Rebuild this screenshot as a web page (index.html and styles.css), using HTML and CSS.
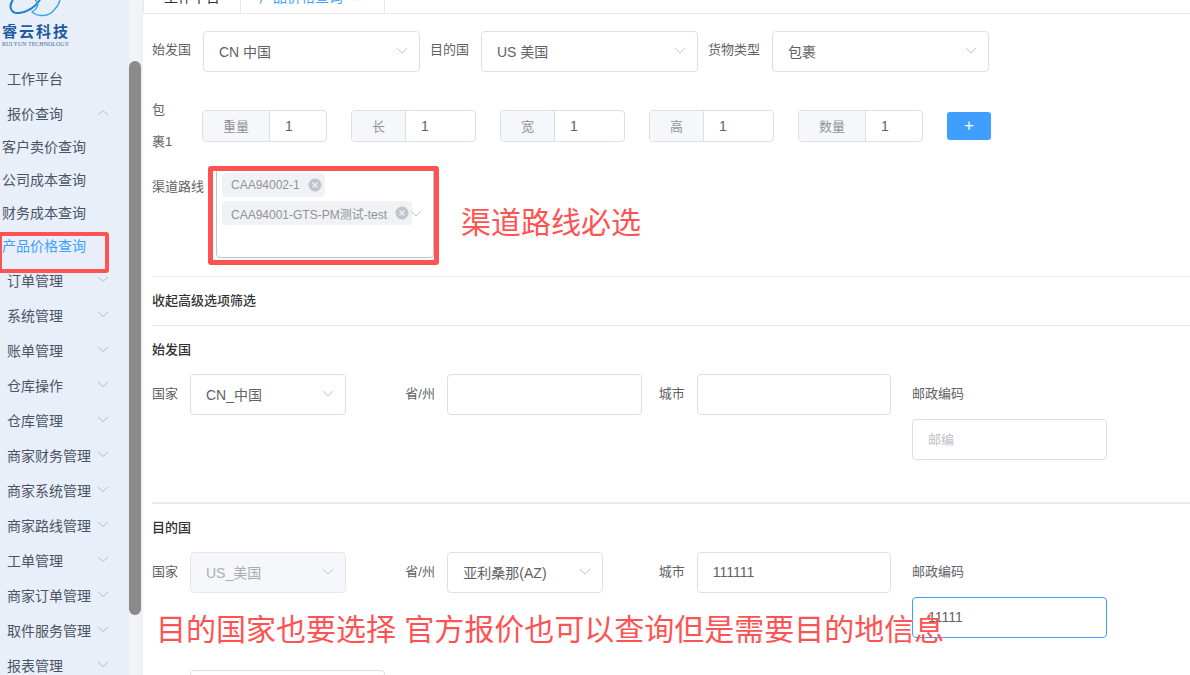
FILE: index.html
```html
<!DOCTYPE html>
<html lang="zh">
<head>
<meta charset="utf-8">
<title>产品价格查询</title>
<link rel="stylesheet" href="styles.css">
</head>
<body>
<div class="app">
  <aside class="sidebar">
    <div class="nav">
      <div class="logo">
        <svg class="logo-arcs" width="64" height="20" viewBox="0 0 64 20" fill="none">
          <path d="M11 0C6 6 9 14 17 13C26 12 33 7 38 0" stroke="#1f7fd0" stroke-width="2"/>
          <path d="M33 0C38 3 36 8 30 12C36 17 47 17 52 10C55 7 57 4 58 0" stroke="#3fa4e6" stroke-width="1.4"/>
        </svg>
        <div class="logo-name">睿云科技</div>
        <div class="logo-sub">RUI YUN TECHNOLOGY</div>
      </div>
      <div class="nav-item">工作平台</div>
      <div class="nav-item">报价查询<svg class="nav-chev" width="12" height="7" viewBox="0 0 12 7"><path d="M1 6L6 1.5L11 6"/></svg></div>
      <div class="nav-sub">客户卖价查询</div>
      <div class="nav-sub">公司成本查询</div>
      <div class="nav-sub">财务成本查询</div>
      <div class="nav-sub active">产品价格查询</div>
      <div class="nav-item">订单管理<svg class="nav-chev" width="12" height="7" viewBox="0 0 12 7"><path d="M1 1L6 5.5L11 1"/></svg></div>
      <div class="nav-item">系统管理<svg class="nav-chev" width="12" height="7" viewBox="0 0 12 7"><path d="M1 1L6 5.5L11 1"/></svg></div>
      <div class="nav-item">账单管理<svg class="nav-chev" width="12" height="7" viewBox="0 0 12 7"><path d="M1 1L6 5.5L11 1"/></svg></div>
      <div class="nav-item">仓库操作<svg class="nav-chev" width="12" height="7" viewBox="0 0 12 7"><path d="M1 1L6 5.5L11 1"/></svg></div>
      <div class="nav-item">仓库管理<svg class="nav-chev" width="12" height="7" viewBox="0 0 12 7"><path d="M1 1L6 5.5L11 1"/></svg></div>
      <div class="nav-item">商家财务管理<svg class="nav-chev" width="12" height="7" viewBox="0 0 12 7"><path d="M1 1L6 5.5L11 1"/></svg></div>
      <div class="nav-item">商家系统管理<svg class="nav-chev" width="12" height="7" viewBox="0 0 12 7"><path d="M1 1L6 5.5L11 1"/></svg></div>
      <div class="nav-item">商家路线管理<svg class="nav-chev" width="12" height="7" viewBox="0 0 12 7"><path d="M1 1L6 5.5L11 1"/></svg></div>
      <div class="nav-item">工单管理<svg class="nav-chev" width="12" height="7" viewBox="0 0 12 7"><path d="M1 1L6 5.5L11 1"/></svg></div>
      <div class="nav-item">商家订单管理<svg class="nav-chev" width="12" height="7" viewBox="0 0 12 7"><path d="M1 1L6 5.5L11 1"/></svg></div>
      <div class="nav-item">取件服务管理<svg class="nav-chev" width="12" height="7" viewBox="0 0 12 7"><path d="M1 1L6 5.5L11 1"/></svg></div>
      <div class="nav-item">报表管理<svg class="nav-chev" width="12" height="7" viewBox="0 0 12 7"><path d="M1 1L6 5.5L11 1"/></svg></div>
    </div>
    <div class="scrollbar"><div class="thumb"></div></div>
  </aside>

  <main class="main">
    <div class="tabs">
      <div class="tab tab-home">工作平台</div>
      <div class="tab tab-active">产品价格查询<span class="tab-x">×</span></div>
    </div>

    <div class="content">
      <div class="row-top">
        <span class="lbl lbl-a">始发国</span>
        <div class="select w217"><span>CN 中国</span><svg class="chev" width="12" height="7" viewBox="0 0 12 7"><path d="M1 1L6 6L11 1"/></svg></div>
        <span class="lbl lbl-b">目的国</span>
        <div class="select w217"><span>US 美国</span><svg class="chev" width="12" height="7" viewBox="0 0 12 7"><path d="M1 1L6 6L11 1"/></svg></div>
        <span class="lbl lbl-c">货物类型</span>
        <div class="select w217"><span>包裹</span><svg class="chev" width="12" height="7" viewBox="0 0 12 7"><path d="M1 1L6 6L11 1"/></svg></div>
      </div>

      <div class="row-parcel">
        <div class="parcel-label">包裹1</div>
        <div class="group g-wide"><span class="prepend">重量</span><span class="gval">1</span></div>
        <div class="group"><span class="prepend">长</span><span class="gval">1</span></div>
        <div class="group"><span class="prepend">宽</span><span class="gval">1</span></div>
        <div class="group"><span class="prepend">高</span><span class="gval">1</span></div>
        <div class="group g-wide"><span class="prepend">数量</span><span class="gval">1</span></div>
        <div class="add-btn">+</div>
      </div>

      <div class="row-route">
        <span class="route-label">渠道路线</span>
        <div class="multi">
          <div class="tag">CAA94002-1<svg class="tag-x" width="14" height="14" viewBox="0 0 14 14"><circle cx="7" cy="7" r="6.5"/><path d="M4.5 4.5L9.5 9.5M9.5 4.5L4.5 9.5"/></svg></div>
          <div class="tag">CAA94001-GTS-PM测试-test<svg class="tag-x" width="14" height="14" viewBox="0 0 14 14"><circle cx="7" cy="7" r="6.5"/><path d="M4.5 4.5L9.5 9.5M9.5 4.5L4.5 9.5"/></svg></div>
          <svg class="multi-chev" width="12" height="7" viewBox="0 0 12 7"><path d="M1 1L6 6L11 1"/></svg>
        </div>
      </div>

      <div class="hr"></div>
      <div class="sec-toggle">收起高级选项筛选</div>
      <div class="hr"></div>

      <div class="sec-title">始发国</div>
      <div class="addr">
        <div class="cell"><span class="cl cl-38">国家</span><div class="select w156"><span>CN_中国</span><svg class="chev" width="12" height="7" viewBox="0 0 12 7"><path d="M1 1L6 6L11 1"/></svg></div></div>
        <div class="cell"><span class="cl cl-42">省/州</span><div class="input w195"></div></div>
        <div class="cell"><span class="cl cl-38">城市</span><div class="input w194"></div></div>
        <div class="cell cell-col"><span class="cl">邮政编码</span><div class="input w195 ph">邮编</div></div>
      </div>

      <div class="hr hr-thick"></div>

      <div class="sec-title">目的国</div>
      <div class="addr">
        <div class="cell"><span class="cl cl-38">国家</span><div class="select w156 disabled"><span>US_美国</span><svg class="chev" width="12" height="7" viewBox="0 0 12 7"><path d="M1 1L6 6L11 1"/></svg></div></div>
        <div class="cell"><span class="cl cl-42">省/州</span><div class="select w156"><span>亚利桑那(AZ)</span><svg class="chev" width="12" height="7" viewBox="0 0 12 7"><path d="M1 1L6 6L11 1"/></svg></div></div>
        <div class="cell"><span class="cl cl-38">城市</span><div class="input w194">111111</div></div>
        <div class="cell cell-col"><span class="cl">邮政编码</span><div class="input w195 focus">11111</div></div>
      </div>
      <div class="last-row"><div class="input w195 last"></div></div>
    </div>
  </main>

  <div class="mark mark-nav"></div>
  <div class="mark mark-route"></div>
  <div class="note note-route">渠道路线必选</div>
  <div class="note note-dest">目的国家也要选择 官方报价也可以查询但是需要目的地信息</div>
</div>
</body>
</html>
```

FILE: styles.css
```css
* { box-sizing: border-box; }
html, body { margin: 0; height: 100%; }
body {
  overflow: hidden;
  background: #fff;
  font-family: "Liberation Sans", "Noto Sans CJK SC", sans-serif;
  font-size: 14px;
  color: #606266;
}
.app { position: relative; display: flex; width: 1190px; height: 675px; overflow: hidden; }

/* sidebar */
.sidebar { flex: 0 0 141px; display: flex; background: #e8eff9; height: 675px; }
.nav { width: 129px; flex: none; }
.logo { height: 61px; padding-left: 2px; }
.logo-arcs { display: block; }
.logo-name {
  margin-top: 4px;
  font-size: 15px;
  line-height: 16px;
  font-weight: 700;
  color: #1d5a9e;
  letter-spacing: 2px;
  white-space: nowrap;
}
.logo-sub {
  font-family: "Liberation Serif", serif;
  font-size: 6px;
  line-height: 8px;
  color: #3f6ea8;
  white-space: nowrap;
}
.nav-item {
  position: relative;
  height: 35px;
  line-height: 36px;
  padding-left: 7px;
  color: #4b5464;
  white-space: nowrap;
}
.nav-sub { height: 33px; line-height: 33px; padding-left: 2px; color: #4b5464; white-space: nowrap; }
.nav-sub.active { color: #409eff; }
.nav-chev { position: absolute; left: 97px; top: 13px; fill: none; stroke: #b4bcc8; stroke-width: 1; }
.scrollbar { width: 12px; background: #f1f3f7; }
.thumb { width: 12px; height: 554px; margin-top: 61px; background: #8b8b8b; border-radius: 6px; }

/* main */
.main { flex: 1; min-width: 0; border-left: 2px solid #eef1f6; }
.tabs { display: flex; height: 41px; margin-top: -27px; border-bottom: 1px solid #e6e8ee; }
.tab { height: 40px; line-height: 48px; color: #303133; white-space: nowrap; border-right: 1px solid #e6e8ee; text-align: center; }
.tab-home { width: 98px; border-left: 1px solid #e6e8ee; }
.tab-active { width: 144px; padding-right: 8px; color: #409eff; }
.tab-x { font-size: 12px; margin-left: 8px; }
.content { padding-left: 9px; }

.lbl { font-size: 13px; line-height: 38px; white-space: nowrap; align-self: flex-start; }
.select, .input {
  display: flex;
  align-items: center;
  height: 41px;
  border: 1px solid #dcdfe6;
  border-radius: 4px;
  padding-left: 15px;
  padding-bottom: 2px;
  background: #fff;
  color: #606266;
  flex: none;
}
.select { justify-content: space-between; padding-right: 11px; }
.chev { fill: none; stroke: #c0c4cc; stroke-width: 1; flex: none; }
.w217 { width: 217px; }
.w156 { width: 156px; }
.w195 { width: 195px; }
.w194 { width: 194px; }
.disabled { background: #f5f7fa; border-color: #e4e7ed; color: #a8adb6; }
.ph { color: #bcc0c8; font-size: 13px; }
.focus { border-color: #409eff; }

.row-top { display: flex; margin-top: 17px; height: 41px; }
.lbl-a { width: 51px; }
.lbl-b { width: 51px; margin-left: 10px; }
.lbl-c { width: 64px; margin-left: 10px; }

.row-parcel { display: flex; margin-top: 38px; height: 64px; }
.parcel-label { width: 24px; font-size: 13px; line-height: 32px; margin-top: -16px; margin-right: 26px; height: 64px; word-break: break-all; }
.group { display: flex; width: 125px; height: 32px; margin-right: 24px; border: 1px solid #dcdfe6; border-radius: 4px; overflow: hidden; flex: none; }
.prepend { width: 54px; flex: none; background: #f5f7fa; border-right: 1px solid #dcdfe6; color: #909399; font-size: 13px; line-height: 32px; text-align: center; }
.g-wide .prepend { width: 67px; }
.gval { padding-left: 15px; line-height: 30px; color: #606266; }
.add-btn { width: 44px; height: 28px; margin-top: 2px; background: #409eff; border-radius: 3px; color: #fff; font-size: 17px; line-height: 27px; text-align: center; }

.row-route { display: flex; height: 102px; }
.route-label { width: 64px; font-size: 13px; line-height: 26px; }
.multi {
  position: relative;
  width: 218px;
  height: 90px;
  margin-top: -6px;
  padding: 4px 0 0 5px;
  border: 1px solid #c0c4cc;
  border-radius: 4px;
  flex: none;
}
.tag {
  display: flex;
  align-items: center;
  width: fit-content;
  height: 24px;
  margin-bottom: 4px;
  padding-left: 9px;
  padding-right: 3px;
  background: #f0f2f5;
  border-radius: 4px;
  color: #909399;
  font-size: 12px;
  white-space: nowrap;
}
.tag-x { margin-left: 8px; }
.tag-x circle { fill: #c0c4cc; }
.tag-x path { stroke: #f0f2f5; stroke-width: 1.4; fill: none; }
.multi-chev { position: absolute; left: 193px; top: 41px; fill: none; stroke: #c0c4cc; stroke-width: 1; }

.hr { height: 1px; background: #e8eaf0; }
.hr-thick { height: 2px; margin-top: 42px; }
.sec-toggle, .sec-title { font-size: 13px; font-weight: 500; color: #303133; white-space: nowrap; height: 48px; line-height: 47px; }

.addr { display: grid; grid-template-columns: repeat(4, 253.33px); }
.cell { display: flex; align-items: flex-start; }
.cell-col { flex-direction: column; }
.cl { font-size: 13px; line-height: 39px; white-space: nowrap; }
.cell-col .cl { height: 45px; }
.cl-38 { width: 38px; }
.cl-42 { width: 42px; }
.last-row { height: 40px; padding-left: 38px; margin-top: 32px; }

/* annotations */
.mark { position: absolute; border-style: solid; border-color: #ff5353; border-radius: 3px; }
.mark-nav { left: -2px; top: 232px; width: 111px; height: 41px; border-width: 4px; }
.mark-route { left: 208px; top: 166px; width: 231px; height: 99px; border-width: 5px; }
.note { position: absolute; color: #ff5353; font-size: 30px; line-height: 36px; white-space: nowrap; }
.note-route { left: 461px; top: 205px; }
.note-dest { left: 156px; top: 612px; }
```
